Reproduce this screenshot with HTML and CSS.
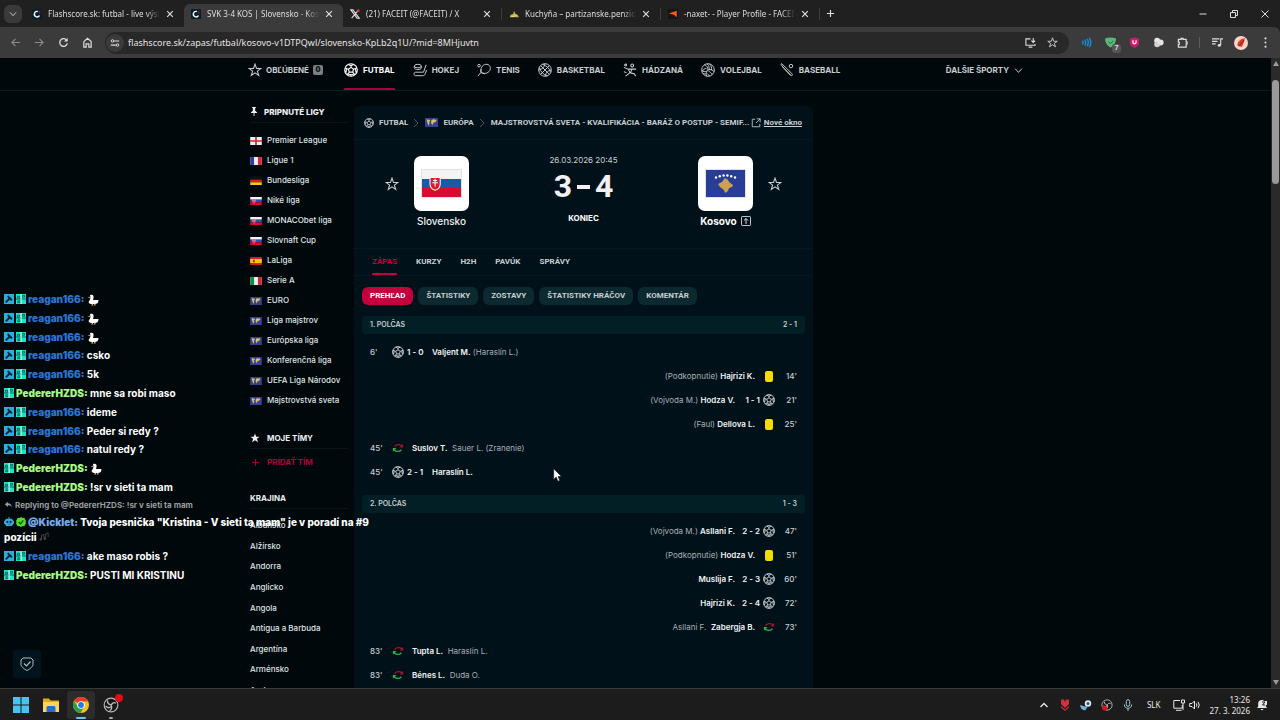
FILE: index.html
```html
<!DOCTYPE html>
<html lang="sk">
<head>
<meta charset="utf-8">
<title>SVK 3-4 KOS | Slovensko - Kosovo</title>
<link rel="stylesheet" href="styles.css">
</head>
<body>
<svg class="defs" aria-hidden="true">
  <symbol id="star" viewBox="0 0 16 16"><path d="M8 1.2l1.7 5h5.2l-4.2 3.1 1.6 5L8 11.2l-4.3 3.1 1.6-5L1.1 6.2h5.2z" fill="none" stroke="currentColor" stroke-width="1.2"/></symbol>
  <symbol id="starfull" viewBox="0 0 16 16"><path d="M8 .8l2 5.2h5.3l-4.2 3.3 1.6 5.5L8 11.6l-4.7 3.2 1.6-5.5L.7 6H6z" fill="currentColor"/></symbol>
  <symbol id="ball" viewBox="0 0 16 16"><g fill="none" stroke="currentColor" stroke-width="1.3"><circle cx="8" cy="8" r="7.2"/><path d="M8 5l3 2.1-1.1 3.4H6.1L5 7.100zM8 5V3M11 7.100l2.200-.8M9.900 10.500l1.500 2M6.100 10.500l-1.500 2M5 7.100l-2.200-.8M5 1.600L8 3l3-1.400M14.900 5.800l-1.700.5.4 3.900 1.200-.4M12.800 13.200l-1.400-.7-3.400 1v1.700M1.100 5.800l1.700.5-.4 3.900-1.200-.4M3.200 13.200l1.400-.7 3.400 1"/></g></symbol>
  <symbol id="hockey" viewBox="0 0 16 16"><g fill="none" stroke="currentColor" stroke-width="1.1"><ellipse cx="5.500" cy="3.500" rx="4" ry="2"/><path d="M1.500 3.500v2c0 2.600 8 2.600 8 0v-2M15 2l-3 8.500H3c-2.500 0-2.500 4 0 4h8c2 0 2.500-.8 3-2.300L15.500 8"/></g></symbol>
  <symbol id="tennis" viewBox="0 0 16 16"><g fill="none" stroke="currentColor" stroke-width="1.1"><path d="M4.500 10.800C3.500 6.500 6 2 10 1.500c3.800-.4 6 2.500 5 6-1 3.600-5.500 5.800-10.500 3.300zM4.500 10.800L1 15M5 11l4 1.400M4.500 10.500L4.800 7"/><circle cx="2.300" cy="3" r="1.500"/></g></symbol>
  <symbol id="basket" viewBox="0 0 16 16"><g fill="none" stroke="currentColor" stroke-width="1.100"><circle cx="8" cy="8" r="7.200"/><path d="M3 3l10 10M13 3L3 13M8 1c-1 4-3 6-7 7M15 8c-4 1-6 3-7 7M5 1.500c5 1.500 8.500 5 9.500 9.500M1.500 5C3 10 6 13.500 11 14.500"/></g></symbol>
  <symbol id="handball" viewBox="0 0 16 16"><g fill="none" stroke="currentColor" stroke-width="1.200"><circle cx="10.500" cy="2.800" r="1.600"/><circle cx="3" cy="2.300" r="1.100"/><path d="M1 5l5 2h9M6 7l2 4-5 4M8 11l5 1.500 1.500 2.500M10.500 7l-2 4M1 10l3 1"/></g></symbol>
  <symbol id="volley" viewBox="0 0 16 16"><g fill="none" stroke="currentColor" stroke-width="1.100"><circle cx="8" cy="8" r="7.200"/><path d="M8 8c0-3-1.500-5-4-6M8 8c3-1 6 0 7 2M8 8c-2 2-3 4.500-1.500 7M9.500 8c0-3-.5-5-2.500-7M12 8c.4-3-.5-5-2-6.700M7 9.200c-2.500 1-4.500.8-6-.5M5.500 12.300c-1.500.5-2.500 0-3.500-.8M8.700 9.300c2 1 3.500 2.500 4 4M7 12c1 1.500 2 2.200 3.500 2.700M6.300 6C4 6.300 2.500 8 1.500 9"/></g></symbol>
  <symbol id="baseball" viewBox="0 0 16 16"><g fill="none" stroke="currentColor" stroke-width="1.100"><path d="M1 1.500l1-.7L13.500 12c1.500 1.500.2 3.500-1.700 2L4 5.500z"/><path d="M3 4.500l9 9"/><circle cx="12.500" cy="3.500" r="2"/></g></symbol>
  <symbol id="x" viewBox="0 0 10 10"><path d="M1.500 1.500l7 7M8.500 1.500l-7 7" stroke="currentColor" stroke-width="1.500"/></symbol>
  <symbol id="chevd" viewBox="0 0 12 12"><path d="M1.500 3.500L6 8.500l4.500-5" fill="none" stroke="currentColor" stroke-width="1.300"/></symbol>
  <symbol id="chevr" viewBox="0 0 12 12"><path d="M3 0L9 6 3 12" fill="none" stroke="currentColor" stroke-width="1.300"/></symbol>
  <symbol id="swap" viewBox="0 0 14 12"><g fill="none" stroke-width="1.500"><path d="M3 4.500C5 1.500 9 1.500 11.500 3.500" stroke="#a3142c"/><path d="M2 7.500c2 3 6.500 3.500 9 .5" stroke="#27b24c"/></g><path d="M13 1v4.500H8.800z" fill="#a3142c"/><path d="M1 10.500V6h4.200z" fill="#27b24c"/></symbol>
  <symbol id="world" viewBox="0 0 13 9"><path fill="#34419a" d="M0 0h13v9H0z"/><path fill="#d9c25e" d="M1.500 1.500l3 .3.8 1L4 4l.5 1.500-1 2-1-2.500zM6.500 2l2-.7 3 .7-.5 1.500-1.500.7-.5 1-.8-1-.7 3-1.500-2.400z"/></symbol>
  <symbol id="sk" viewBox="0 0 13 9"><path fill="#f3f3f3" d="M0 0h13v3H0z"/><path fill="#1c5aa8" d="M0 3h13v3H0z"/><path fill="#d80c30" d="M0 6h13v3H0z"/><g transform="translate(.8 .8) scale(.85)"><path d="M2.200 2h4v2.500c0 1.400-1 2.200-2 2.500-1-.3-2-1.100-2-2.500z" fill="#d81c38" stroke="#fff" stroke-width=".4"/><path d="M4.200 2.500v3M3.400 3.200h1.600M3.100 4.100h2.200" stroke="#fff" stroke-width=".4"/></g></symbol>
  <symbol id="hammer" viewBox="0 0 11 11"><path fill="#28aee0" d="M0 0h11v11H0z"/><path fill="#05252f" d="M4.500 1.500L9.500 6 8 7.600 6.500 6.300 2.500 9.800 1.300 8.600l3.700-4-1.500-1.300z"/></symbol>
  <symbol id="gift" viewBox="0 0 11 11"><path fill="#1de5c0" d="M0 0h11v11H0z"/><path d="M1.500 2.500h2.500v2h-2.500zM7 1.500h2.500v2H7zM0 5.500h11M2 7.500h2.500v2H2z" fill="none" stroke="#075e63"/><path fill="#c4fff0" d="M5 0h1.200v11H5z"/></symbol>
  <symbol id="duck" viewBox="0 0 12 12"><path fill="#fff" d="M3 1.200c2.500-1 4 .3 3.500 2.800L6 6h5.500C11.500 9 10 10 7.500 10H4C1.500 9.500 1 8 2.500 6.500L3.500 4z"/><path fill="#e5b070" d="M3.400 2.500v1.600L.5 3.800zM5 10h1v1.500H4zM7.500 10h1v1.500h-2z"/></symbol>
  <symbol id="obs" viewBox="0 0 18 18"><circle cx="9" cy="9" r="7.700" fill="#171717" stroke="#bbb" stroke-width="1.300"/><path d="M5 4c0 3 2 5 5 5M14.500 7c-2.500-1.500-5 0-5.300 3M7.500 15.500c2.500-1.500 3-4 1.500-6.500M3 10c1.500 2 4 2.500 6 1" fill="none" stroke="#bbb" stroke-width="1.500"/></symbol>
  <symbol id="flash" viewBox="0 0 12 12"><path fill="#07202d" d="M0 0h12v12H0z"/><path d="M7 3a3.300 3.300 0 1 0 2 4.800" fill="none" stroke="#fff" stroke-width="1.700"/><path d="M8 3.500l2-1.500M8.500 5l1.700-.4" stroke="#f03" stroke-width="1.200"/></symbol>
</svg>

<header class="browser">
  <div class="tabstrip">
    <button class="tabsearch" aria-label="Hľadať karty"><svg><use href="#chevd"/></svg></button>
    <div class="tab"><svg class="fav"><use href="#flash"/></svg><span>Flashscore.sk: futbal - live výsle</span><button aria-label="Zavrieť"><svg><use href="#x"/></svg></button></div>
    <div class="tab active"><svg class="fav"><use href="#flash"/></svg><span>SVK 3-4 KOS | Slovensko - Koso</span><button aria-label="Zavrieť"><svg><use href="#x"/></svg></button></div>
    <div class="tab sep"><svg class="fav" viewBox="0 0 12 12"><path d="M1 1h2.500l7.500 10H8.500zM10.500 1L2 11" fill="none" stroke="#ddd" stroke-width="1.300"/><circle cx="10" cy="2" r="1.600" fill="#d33"/></svg><span>(21) FACEIT (@FACEIT) / X</span><button aria-label="Zavrieť"><svg><use href="#x"/></svg></button></div>
    <div class="tab sep"><svg class="fav" viewBox="0 0 12 12"><path d="M1 10c0-3 2-4 4-4l1-4 2 4c2 0 3 2 4 4z" fill="#b9b04d"/><path d="M3 9l6-1" stroke="#f4f0a0"/></svg><span>Kuchyňa – partizanske.penzion-</span><button aria-label="Zavrieť"><svg><use href="#x"/></svg></button></div>
    <div class="tab sep"><svg class="fav" viewBox="0 0 12 12"><path fill="#161616" d="M0 0h12v12H0z"/><path d="M1 5.500L10.500 2v8L7 7z" fill="#ff5a1f"/></svg><span>-naxet- - Player Profile - FACEIT</span><button aria-label="Zavrieť"><svg><use href="#x"/></svg></button></div>
    <button class="newtab" aria-label="Nová karta"><svg viewBox="0 0 10 10"><path d="M5 1v8M1 5h8" stroke="currentColor" stroke-width="1.300"/></svg></button>
    <div class="winctl">
      <button aria-label="Minimalizovať"><svg viewBox="0 0 10 10"><path d="M1.500 5h7" stroke="currentColor"/></svg></button>
      <button aria-label="Obnoviť"><svg viewBox="0 0 10 10"><path d="M1.500 3.500h5v5h-5zM3.500 3V1.500h5v5H7" fill="none" stroke="currentColor"/></svg></button>
      <button aria-label="Zavrieť okno"><svg viewBox="0 0 10 10"><path d="M1.500 1.500l7 7M8.500 1.500l-7 7" stroke="currentColor"/></svg></button>
    </div>
  </div>
  <div class="toolbar">
    <div class="navbtns">
      <button class="off" aria-label="Späť"><svg viewBox="0 0 12 12"><path d="M11 6H2M6 2L2 6l4 4" fill="none" stroke="currentColor" stroke-width="1.200"/></svg></button>
      <button class="off" aria-label="Dopredu"><svg viewBox="0 0 12 12"><path d="M1 6h9M6 2l4 4-4 4" fill="none" stroke="currentColor" stroke-width="1.200"/></svg></button>
      <button aria-label="Obnoviť stránku"><svg viewBox="0 0 12 12"><path d="M9.800 4A4.200 4.200 0 1 0 10.200 7" fill="none" stroke="currentColor" stroke-width="1.400"/><path d="M10.500 1v4h-4z" fill="currentColor"/></svg></button>
      <button aria-label="Domov"><svg viewBox="0 0 12 12"><path d="M2 5l4-3.500L10 5v6H7.500V7.500h-3V11H2z" fill="none" stroke="currentColor" stroke-width="1.300"/></svg></button>
    </div>
    <div class="omnibox">
      <button class="tune" aria-label="Informácie o stránke"><svg viewBox="0 0 12 12"><path d="M5 3.500h6M1 8.500h6" stroke="currentColor" stroke-width="1.300"/><circle cx="3" cy="3.500" r="1.500" fill="none" stroke="currentColor" stroke-width="1.200"/><circle cx="9" cy="8.500" r="1.500" fill="none" stroke="currentColor" stroke-width="1.200"/></svg></button>
      <input type="text" aria-label="Adresa" value="flashscore.sk/zapas/futbal/kosovo-v1DTPQwl/slovensko-KpLb2q1U/?mid=8MHjuvtn">
      <button aria-label="Inštalovať"><svg viewBox="0 0 12 12"><path d="M6 2H1v7h10V7.500M4 11h4M9 1v4.500M7 4l2 2 2-2" fill="none" stroke="currentColor" stroke-width="1.200"/></svg></button>
      <button aria-label="Záložka"><svg><use href="#star"/></svg></button>
    </div>
    <div class="exts">
      <button aria-label="Zvuk"><svg viewBox="0 0 12 12"><path d="M1.500 4q1.500 2 0 4M4 2.800q2.300 3.200 0 6.400M6.500 2q3 4 0 8M9 1q3.500 5 0 10" fill="none" stroke="#178ad8" stroke-width="1.600"/></svg></button>
      <button class="adg" aria-label="AdGuard"><svg viewBox="0 0 12 12"><path d="M0 1.500Q6-.5 12 1.500C12 6 9.500 9.500 6 11.500 2.500 9.500 0 6 0 1.500z" fill="#58b878"/><path d="M4 5.500l2 1.500 3-2.500" stroke="#2b6540" fill="none"/></svg><b>7</b></button>
      <button aria-label="uBlock"><svg viewBox="0 0 12 12"><path d="M6 .5l5 1.200v4.500C11 9 8.500 10.700 6 12 3.500 10.700 1 9 1 6.200V1.700z" fill="#d01c66"/><path d="M4.300 3.500v3q1.700 2 3.400 0v-3" fill="none" stroke="#fff" stroke-width="1.300"/></svg></button>
      <button aria-label="Rozšírenie"><svg viewBox="0 0 12 12"><circle cx="4.500" cy="4" r="3.200" fill="#e8e8e8"/><circle cx="4.500" cy="8" r="3.200" fill="#cfcfcf"/><circle cx="8.300" cy="6" r="3.300" fill="#e2e2e2"/></svg></button>
      <button aria-label="Rozšírenia"><svg viewBox="0 0 12 12"><path d="M1.500 2.500h3V1.500h2v1h3.500v3h1v2h-1v3.500H1.500V8h1V5.500h-1z" fill="none" stroke="currentColor" stroke-width="1.300"/></svg></button>
      <i></i>
      <button aria-label="Médiá"><svg viewBox="0 0 12 12"><path d="M0 2h8M0 4.800h6M0 7.500h4M9.500 9V2H12" fill="none" stroke="currentColor" stroke-width="1.200"/><circle cx="8" cy="9" r="1.700" fill="currentColor"/></svg></button>
      <button class="avatar" aria-label="Profil"><svg viewBox="0 0 14 14"><circle cx="7" cy="7" r="7" fill="#f8d5c8"/><path d="M4 10C2 8 5 4 8 3l3-1-1 4-2 5z" fill="#d9402b"/><path d="M5 10l5-6" stroke="#762018"/></svg></button>
      <button aria-label="Ponuka"><svg viewBox="0 0 12 12"><g fill="currentColor"><circle cx="6" cy="1.500" r="1.100"/><circle cx="6" cy="6" r="1.100"/><circle cx="6" cy="10.500" r="1.100"/></g></svg></button>
    </div>
  </div>
</header>

<div class="viewport">
  <div class="page">
    <nav class="sports"><div class="wrap">
      <a href="#"><svg><use href="#star"/></svg>OBĽÚBENÉ<b class="count">0</b></a>
      <a href="#" class="on"><svg><use href="#ball"/></svg>FUTBAL</a>
      <a href="#"><svg><use href="#hockey"/></svg>HOKEJ</a>
      <a href="#"><svg><use href="#tennis"/></svg>TENIS</a>
      <a href="#"><svg><use href="#basket"/></svg>BASKETBAL</a>
      <a href="#"><svg><use href="#handball"/></svg>HÁDZANÁ</a>
      <a href="#"><svg><use href="#volley"/></svg>VOLEJBAL</a>
      <a href="#"><svg><use href="#baseball"/></svg>BASEBALL</a>
      <button class="more">ĎALŠIE ŠPORTY<svg><use href="#chevd"/></svg></button>
    </div></nav>

    <div class="wrap cols">
      <aside>
        <h2 class="pin"><svg viewBox="0 0 10 12"><path d="M2.500 0h5v1l-1 .8V5L9 7v1H5.600v4H4.400V8H1V7l2.500-2V1.800L2.500 1z" fill="currentColor"/></svg>PRIPNUTÉ LIGY</h2>
        <ul class="leagues">
          <li><a href="#"><svg viewBox="0 0 13 9"><path fill="#eee" d="M0 0h13v9H0z"/><path d="M6.500 0v9M0 4.500h13" stroke="#d3202f" stroke-width="1.800"/></svg>Premier League</a></li>
          <li><a href="#"><svg viewBox="0 0 13 9"><path fill="#eee" d="M0 0h13v9H0z"/><path fill="#2c3fa0" d="M0 0h4.300v9H0z"/><path fill="#d8263a" d="M8.700 0H13v9H8.700z"/></svg>Ligue 1</a></li>
          <li><a href="#"><svg viewBox="0 0 13 9"><path fill="#111" d="M0 0h13v3H0z"/><path fill="#d31f1f" d="M0 3h13v3H0z"/><path fill="#f6c51d" d="M0 6h13v3H0z"/></svg>Bundesliga</a></li>
          <li><a href="#"><svg><use href="#sk"/></svg>Niké liga</a></li>
          <li><a href="#"><svg><use href="#sk"/></svg>MONACObet liga</a></li>
          <li><a href="#"><svg><use href="#sk"/></svg>Slovnaft Cup</a></li>
          <li><a href="#"><svg viewBox="0 0 13 9"><path fill="#cf2027" d="M0 0h13v9H0z"/><path fill="#f8c41c" d="M0 2.200h13v4.600H0z"/><path fill="#96452a" d="M3 3h2.200v3H3z"/></svg>LaLiga</a></li>
          <li><a href="#"><svg viewBox="0 0 13 9"><path fill="#eee" d="M0 0h13v9H0z"/><path fill="#0a9149" d="M0 0h4.300v9H0z"/><path fill="#d3263a" d="M8.700 0H13v9H8.700z"/></svg>Serie A</a></li>
          <li><a href="#"><svg><use href="#world"/></svg>EURO</a></li>
          <li><a href="#"><svg><use href="#world"/></svg>Liga majstrov</a></li>
          <li><a href="#"><svg><use href="#world"/></svg>Európska liga</a></li>
          <li><a href="#"><svg><use href="#world"/></svg>Konferenčná liga</a></li>
          <li><a href="#"><svg><use href="#world"/></svg>UEFA Liga Národov</a></li>
          <li><a href="#"><svg><use href="#world"/></svg>Majstrovstvá sveta</a></li>
        </ul>
        <h2><svg viewBox="0 0 16 16"><use href="#starfull"/></svg>MOJE TÍMY</h2>
        <button class="addteam"><svg viewBox="0 0 10 10"><path d="M5 1v8M1 5h8" stroke="currentColor"/></svg>PRIDAŤ TÍM</button>
        <h2 class="plain">KRAJINA</h2>
        <ul class="countries">
          <li><a href="#">Albánsko</a></li><li><a href="#">Alžírsko</a></li><li><a href="#">Andorra</a></li><li><a href="#">Anglicko</a></li><li><a href="#">Angola</a></li><li><a href="#">Antigua a Barbuda</a></li><li><a href="#">Argentína</a></li><li><a href="#">Arménsko</a></li><li><a href="#">Aruba</a></li>
        </ul>
      </aside>

      <main>
        <div class="crumbs">
          <svg class="cball"><use href="#ball"/></svg><a href="#">FUTBAL</a><svg class="arr"><use href="#chevr"/></svg><svg class="flag"><use href="#world"/></svg><a href="#">EURÓPA</a><svg class="arr"><use href="#chevr"/></svg><a href="#" class="league">MAJSTROVSTVÁ SVETA - KVALIFIKÁCIA - BARÁŽ O POSTUP - SEMIF...</a>
          <a href="#" class="newwin"><svg viewBox="0 0 12 12"><path d="M5 1.500H1.500v9h9V7M7 1h4v4M11 1L6 6" fill="none" stroke="currentColor"/></svg><u>Nové okno</u></a>
        </div>
        <section class="duel">
          <div class="team home">
            <button aria-label="Pridať Slovensko"><svg><use href="#star"/></svg></button>
            <div class="crest"><svg><use href="#sk"/></svg></div>
            <a href="#">Slovensko</a>
          </div>
          <div class="result"><time>26.03.2026 20:45</time><div class="score"><span>3</span><i></i><span>4</span></div><strong>KONIEC</strong></div>
          <div class="team away">
            <button aria-label="Pridať Kosovo"><svg><use href="#star"/></svg></button>
            <div class="crest"><svg viewBox="0 0 39 27"><path fill="#283e96" d="M0 0h39v27H0z"/><path fill="#cda14d" d="M19 8l3 2 1 2 4 3-1 2-3 1-1 3-3 2-1-3-4-3-2-3 4-2z"/><g fill="#fff"><circle cx="10" cy="7.500" r="1.200"/><circle cx="13.800" cy="6.300" r="1.200"/><circle cx="17.600" cy="5.500" r="1.200"/><circle cx="21.400" cy="5.500" r="1.200"/><circle cx="25.200" cy="6.300" r="1.200"/><circle cx="29" cy="7.500" r="1.200"/></g></svg></div>
            <a href="#" class="win">Kosovo<svg viewBox="0 0 12 12"><rect x=".5" y=".5" width="11" height="11" rx="1.500" fill="none" stroke="currentColor"/><path d="M6 9.500V3M3.500 5.500L6 3l2.500 2.500" fill="none" stroke="currentColor"/></svg></a>
          </div>
        </section>
        <nav class="tabs"><a href="#" class="on">ZÁPAS</a><a href="#">KURZY</a><a href="#">H2H</a><a href="#">PAVÚK</a><a href="#">SPRÁVY</a></nav>
        <div class="pills"><button class="on">PREHĽAD</button><button>ŠTATISTIKY</button><button>ZOSTAVY</button><button>ŠTATISTIKY HRÁČOV</button><button>KOMENTÁR</button></div>

        <section class="half">
          <h3><span>1. POLČAS</span><span>2 - 1</span></h3>
          <div class="ev"><time>6'</time><svg><use href="#ball"/></svg><b class="sc">1 - 0</b><p><b>Valjent M.</b> (Haraslín L.)</p></div>
          <div class="ev r"><time>14'</time><i class="card"></i><p>(Podkopnutie) <b>Hajrizi K.</b></p></div>
          <div class="ev r"><time>21'</time><svg><use href="#ball"/></svg><b class="sc">1 - 1</b><p>(Vojvoda M.) <b>Hodza V.</b></p></div>
          <div class="ev r"><time>25'</time><i class="card"></i><p>(Faul) <b>Dellova L.</b></p></div>
          <div class="ev"><time>45'</time><svg><use href="#swap"/></svg><p><b>Suslov T.</b>&nbsp; Sauer L. (Zranenie)</p></div>
          <div class="ev"><time>45'</time><svg><use href="#ball"/></svg><b class="sc">2 - 1</b><p><b>Haraslín L.</b></p></div>
        </section>
        <section class="half">
          <h3><span>2. POLČAS</span><span>1 - 3</span></h3>
          <div class="ev r"><time>47'</time><svg><use href="#ball"/></svg><b class="sc">2 - 2</b><p>(Vojvoda M.) <b>Asllani F.</b></p></div>
          <div class="ev r"><time>51'</time><i class="card"></i><p>(Podkopnutie) <b>Hodza V.</b></p></div>
          <div class="ev r"><time>60'</time><svg><use href="#ball"/></svg><b class="sc">2 - 3</b><p><b>Muslija F.</b></p></div>
          <div class="ev r"><time>72'</time><svg><use href="#ball"/></svg><b class="sc">2 - 4</b><p><b>Hajrizi K.</b></p></div>
          <div class="ev r"><time>73'</time><svg><use href="#swap"/></svg><p>Asllani F. &nbsp;<b>Zabergja B.</b></p></div>
          <div class="ev"><time>83'</time><svg><use href="#swap"/></svg><p><b>Tupta L.</b>&nbsp; Haraslín L.</p></div>
          <div class="ev"><time>83'</time><svg><use href="#swap"/></svg><p><b>Bénes L.</b>&nbsp; Duda O.</p></div>
        </section>
      </main>
    </div>
  </div>
  <div class="scroll"><i class="up"></i><i class="thumb"></i><i class="down"></i></div>
  <button class="privacy" aria-label="Súkromie"><svg viewBox="0 0 14 14"><path d="M3 1h8l2 2v4.500c0 2-3 4.500-6 6-3-1.500-6-4-6-6V3z" fill="none" stroke="currentColor"/><path d="M4 6.500L6.500 9l4-4.500" fill="none" stroke="currentColor" stroke-width="1.200"/></svg></button>
</div>

<div class="chat">
  <div class="msgs">
    <p><svg><use href="#hammer"/></svg><svg><use href="#gift"/></svg><b class="re">reagan166:</b> <svg class="emote"><use href="#duck"/></svg></p>
    <p><svg><use href="#hammer"/></svg><svg><use href="#gift"/></svg><b class="re">reagan166:</b> <svg class="emote"><use href="#duck"/></svg></p>
    <p><svg><use href="#hammer"/></svg><svg><use href="#gift"/></svg><b class="re">reagan166:</b> <svg class="emote"><use href="#duck"/></svg></p>
    <p><svg><use href="#hammer"/></svg><svg><use href="#gift"/></svg><b class="re">reagan166:</b> csko</p>
    <p><svg><use href="#hammer"/></svg><svg><use href="#gift"/></svg><b class="re">reagan166:</b> 5k</p>
    <p><svg><use href="#gift"/></svg><b class="pe">PedererHZDS:</b> mne sa robi maso</p>
    <p><svg><use href="#hammer"/></svg><svg><use href="#gift"/></svg><b class="re">reagan166:</b> ideme</p>
    <p><svg><use href="#hammer"/></svg><svg><use href="#gift"/></svg><b class="re">reagan166:</b> Peder si redy ?</p>
    <p><svg><use href="#hammer"/></svg><svg><use href="#gift"/></svg><b class="re">reagan166:</b> natul redy ?</p>
    <p><svg><use href="#gift"/></svg><b class="pe">PedererHZDS:</b> <svg class="emote"><use href="#duck"/></svg></p>
    <p><svg><use href="#gift"/></svg><b class="pe">PedererHZDS:</b> !sr v sieti ta mam</p>
  </div>
  <p class="reply"><svg viewBox="0 0 12 12"><path d="M5 1L.5 5 5 9V6.500c3 0 5 .5 6 3.500 0-4-2-6.500-6-6.500z" fill="currentColor"/></svg>Replying to @PedererHZDS: !sr v sieti ta mam</p>
  <p class="long"><svg viewBox="0 0 11 11"><path d="M5 0h1v2h2.500L10 3.500 11 5v2l-1 1-1.500 2h-6L1 8 0 7V5l1-1.500L2.500 2H5z" fill="#37a9df"/><path d="M3 4.500h1.500v1.700H3zM6.500 4.500H8v1.700H6.500zM4 8h3.500" fill="#092033" stroke="#092033" stroke-width=".4"/></svg><svg viewBox="0 0 11 11"><path d="M5.500 0l1.700 1 2-.1.800 1.800 1 1.300-.5 1.500.5 1.600-1 1.300-.8 1.700-2-.1-1.700 1-1.700-1-2 .1L1 8.400 0 7.100l.5-1.600L0 4l1-1.300L1.800.9l2 .1z" fill="#50dc28"/><path d="M3 5.500l2 2 3-3.700" fill="none" stroke="#083d00" stroke-width="1.200"/></svg><b class="ki">@Kicklet:</b> Tvoja pesnička "Kristina - V sieti ta mam" je v poradí na #9<br>pozícii <svg class="notes" viewBox="0 0 12 12"><path d="M3 9V4l3-1v5M8 7V2l3-1v5" fill="none" stroke="currentColor"/><circle cx="2" cy="9" r="1.400" fill="currentColor"/><circle cx="7" cy="8" r="1.400" fill="currentColor"/></svg></p>
  <p><svg><use href="#hammer"/></svg><svg><use href="#gift"/></svg><b class="re">reagan166:</b> ake maso robis ?</p>
  <p><svg><use href="#gift"/></svg><b class="pe">PedererHZDS:</b> PUSTI MI KRISTINU</p>
</div>

<svg class="cursor" viewBox="0 0 9 14"><path d="M.7.8v10.600l2.500-2.300 1.700 4.100 1.900-.8L5.100 8.400h3.300z" fill="#fff" stroke="#111" stroke-width=".6"/></svg>

<footer class="taskbar">
  <div class="apps">
    <button aria-label="Štart"><svg viewBox="0 0 16 16"><path d="M0 0h7.500v7.500H0zM8.500 0H16v7.500H8.500zM0 8.500h7.500V16H0zM8.500 8.500H16V16H8.500z" fill="#49c2f2"/></svg></button>
    <button aria-label="Prieskumník"><svg viewBox="0 0 16 16"><path fill="#e6a817" d="M0 1.500h6l1.500 2H16V15H0z"/><path fill="#ffd65a" d="M0 5h16v10H0z"/><path fill="#1975c5" d="M3.500 10.500q0-1.500 1.500-1.500h6q1.500 0 1.500 1.500V15h-9z"/></svg></button>
    <button class="run big" aria-label="Chrome"><svg viewBox="0 0 16 16"><circle cx="8" cy="8" r="8" fill="#f9c31f"/><path d="M8 8L1 4.100A8 8 0 0 1 15 4.100L15 4.500H8z" fill="#e33b2e"/><path d="M1 4.100A8 8 0 0 0 7.500 16L11.200 9.800 8 8 4.800 9.800z" fill="#26a04a"/><circle cx="8" cy="8" r="3.800" fill="#fff"/><circle cx="8" cy="8" r="2.900" fill="#2b77e8"/></svg></button>
    <button class="run" aria-label="OBS"><svg viewBox="0 0 18 18"><use href="#obs"/></svg><i class="rec"></i></button>
  </div>
  <div class="tray">
    <svg viewBox="0 0 12 12"><path d="M2.500 8L6 4.500 9.500 8" fill="none" stroke="currentColor" stroke-width="1.300"/></svg>
    <svg viewBox="0 0 12 12"><path d="M2 .5h3L6 3l1-2.500h3V5L6 9 2 5zM2 7l4 3.500L10 7v1.500L6 12 2 8.500z" fill="#d0303f"/></svg>
    <svg viewBox="0 0 12 12"><circle cx="8" cy="4.500" r="3.200" fill="#dbe9f4"/><path d="M0 6l5 1.500L8 7 5.500 11C2.500 12 .5 9.500 0 6z" fill="#6db3dc"/><circle cx="8" cy="4.500" r="1.500" fill="#23567c"/></svg>
    <svg viewBox="0 0 12 12"><use href="#obs"/><circle cx="3.500" cy="9" r="2.500" fill="#e30e18"/></svg>
    <svg viewBox="0 0 12 12"><rect x="4.300" y=".7" width="3.400" height="6.600" rx="1.700" fill="none" stroke="#9bc9d3"/><path d="M2.300 5.500c0 5 7.400 5 7.400 0M6 9.300V12" fill="none" stroke="#9bc9d3"/></svg>
    <span class="lang">SLK</span>
    <svg viewBox="0 0 12 12"><path d="M7 1.500H.8v7.700h8.500V6M3 11.300h5.500M8.500 1h3v3h-3zM10 4v7" fill="none" stroke="currentColor"/></svg>
    <svg class="snd" viewBox="0 0 12 12"><path d="M.7 4.500H3L5.500 2v8L3 7.500H.7zM7.300 4.300q1.300 1.700 0 3.400M9 2.800q2.600 3.200 0 6.400" fill="none" stroke="currentColor"/></svg>
    <time>13:26<br>27. 3. 2026</time>
    <svg viewBox="0 0 12 12"><path d="M1 9l1.200-1.500V4C2.500.5 7 .3 8 2h3v3.500L9.500 7l1.500 2zM4.500 10h3q-1.500 2.500-3 0z" fill="currentColor"/><path d="M6 3h3L6.500 6H9" fill="none" stroke="#1c1c1c"/></svg>
  </div>
</footer>
</body>
</html>
```

FILE: styles.css
```css
* { box-sizing: border-box; }
body { margin: 0; height: 100vh; display: flex; flex-direction: column; overflow: hidden; position: relative; background: #00080b; color: #dfe3e5; font: 500 8px/12px Inter, sans-serif; }
button { border: 0; padding: 0; background: none; color: inherit; font: inherit; display: flex; align-items: center; justify-content: center; }
a { color: inherit; text-decoration: none; }
ul { list-style: none; margin: 0; padding: 0; }
p, h2, h3 { margin: 0; }
svg { display: block; flex: none; width: 12px; height: 12px; }
.defs { position: absolute; width: 0; height: 0; }

/* browser */
.browser { flex: none; background: #202020; color: #dedede; font: 9px/12px "Noto Sans", sans-serif; }
.tabstrip { display: flex; align-items: center; height: 27px; padding-left: 4px; }
.tabsearch { width: 18px; height: 18px; border-radius: 6px; background: #3a3a3a; margin-right: 3px; }
.tabsearch svg { width: 8px; height: 8px; }
.tab { flex: 0 1 159px; min-width: 0; height: 23px; margin-top: 4px; padding: 0 10px 4px 7px; display: flex; align-items: center; gap: 6px; position: relative; }
.tab span { flex: 1; min-width: 0; overflow: hidden; white-space: nowrap; font-size: 8px; mask-image: linear-gradient(90deg, #000 88%, transparent); }
.tab .fav { width: 10px; height: 10px; }
.tab button svg { width: 8px; height: 8px; }
.tab.active { background: #3b3b3b; border-radius: 6px 6px 0 0; }
.tab.sep { border-right: 1px solid #3b3b3b; height: 12px; margin: 0; padding-bottom: 0; }
.newtab { width: 20px; height: 20px; }
.newtab svg { width: 9px; height: 9px; }
.winctl { margin-left: auto; display: flex; }
.winctl button { width: 31px; height: 26px; }
.winctl svg { width: 10px; height: 10px; }
.toolbar { height: 31px; display: flex; align-items: center; background: #3b3b3b; border-radius: 0 6px 0 0; padding: 0 3px; }
.navbtns { display: flex; }
.navbtns button { width: 24px; height: 24px; }
.navbtns svg { width: 11px; height: 11px; }
.navbtns .off { color: #8b8b8b; }
.omnibox { flex: 1; height: 22px; margin: 0 5px 0 6px; padding: 0 6px 0 1px; border-radius: 11px; background: #282828; display: flex; align-items: center; }
.omnibox button { width: 22px; height: 20px; }
.omnibox button svg { width: 11px; height: 11px; }
.omnibox .tune { width: 18px; height: 18px; border-radius: 9px; background: #3b3b3b; }
.omnibox .tune svg { width: 10px; height: 10px; }
.omnibox input { flex: 1; min-width: 0; border: 0; background: none; outline: 0; padding: 0 4px; color: #e3e3e3; font: inherit; }
.exts { display: flex; align-items: center; }
.exts button { width: 24px; height: 22px; position: relative; }
.exts svg { width: 11px; height: 11px; }
.exts .avatar svg { width: 14px; height: 14px; }
.exts i { width: 1px; height: 11px; margin: 0 5px; background: #5d5d5d; }
.adg b { position: absolute; right: 1px; bottom: 1px; width: 9px; height: 9px; border-radius: 3px; background: #555; font: bold 7px/9px Roboto, sans-serif; text-align: center; }

/* page */
.viewport { flex: 1; min-height: 0; display: flex; position: relative; overflow: hidden; }
.page { flex: 1; min-width: 0; overflow: hidden; }
.wrap { max-width: 775px; margin: 0 auto; }
.sports { border-bottom: 1px solid #0a1b20; }
.sports .wrap { display: flex; height: 32px; gap: 18px; font-weight: 700; }
.sports a, .more { display: flex; align-items: center; gap: 5px; padding-bottom: 6px; border-bottom: 2px solid transparent; color: #c9cdcf; }
.sports svg { width: 14px; height: 14px; }
.sports .on { color: #fff; border-color: #a9003c; }
.sports a:first-child { margin-right: 3px; gap: 4px; }
.count { width: 10px; height: 10px; border-radius: 2px; background: #7b8083; color: #0a1418; font-size: 7px; line-height: 10px; text-align: center; }
.more { margin-left: auto; font-weight: 700; }
.sports .more svg { width: 9px; height: 9px; }
.cols { display: grid; grid-template-columns: 100px minmax(0, 459px) 1fr; gap: 6px; padding-top: 15px; }
aside { padding-left: 2px; }
h2 { display: flex; align-items: center; gap: 7px; height: 17px; padding-bottom: 5px; border-bottom: 1px solid #07161a; font-size: 8px; line-height: 12px; font-weight: 700; color: #eef0f1; }
h2 svg { width: 10px; height: 10px; }
h2.pin { gap: 6px; font-weight: 800; }
h2.pin svg { width: 8px; height: 9px; }
.leagues { padding: 7px 0 22px; }
.leagues a { display: flex; align-items: center; gap: 5px; height: 20px; white-space: nowrap; }
.leagues svg { width: 12px; height: 8px; margin-top: 1px; }
.addteam { gap: 6px; height: 12px; margin: 7px 0 24px; color: #b00039; font-weight: 700; }
.addteam svg { width: 11px; height: 9px; }
.countries { height: 185px; margin-top: 6px; display: flex; flex-direction: column; justify-content: space-between; }
.countries a { display: block; line-height: 20px; }

main { background: #00111a; border-radius: 6px; color: #c9ced1; padding-bottom: 8px; }
.crumbs, .tabs, .pills { font-family: Roboto, sans-serif; font-weight: 700; }
.crumbs { display: flex; align-items: center; height: 34px; padding: 0 11px 0 10px; border-bottom: 1px solid #04191f; white-space: nowrap; }
.crumbs svg { width: 10px; height: 10px; }
.crumbs .cball { margin-right: 5px; }
.crumbs .arr { width: 8px; height: 8px; margin: 0 5px 0 4px; color: #53646b; }
.crumbs .flag { width: 13px; height: 9px; margin-right: 5px; }
.newwin { display: flex; gap: 3px; align-items: center; margin-left: auto; }
.duel { display: grid; grid-template-columns: 1fr 109px 1fr; height: 109px; padding-top: 16px; border-bottom: 1px solid #04191f; }
.team { display: grid; grid-template-columns: 14px 55px 14px; column-gap: 15px; justify-content: center; grid-template-rows: 55px 20px; align-items: center; }
.team button { grid-row: 1; }
.team.away button { grid-column: 3; }
.team svg { width: 14px; height: 14px; }
.crest { grid-row: 1; grid-column: 2; height: 55px; border-radius: 7px; background: #fff; display: grid; place-items: center; }
.crest svg { width: 39px; height: 27px; outline: 1px solid #dfe3e6; }
.team > a { grid-row: 2; grid-column: 1 / 4; justify-self: center; font-size: 10px; font-weight: 500; color: #eef0f1; display: flex; align-items: center; gap: 4px; }
.team > a svg { width: 10px; height: 10px; }
.team .win { font-weight: 700; color: #fff; }
.result { display: flex; flex-direction: column; align-items: center; }
.result time { line-height: 9px; font-weight: 400; }
.score { display: flex; align-items: center; gap: 5px; height: 43px; font: 700 32px/43px Roboto, sans-serif; color: #f3f0f6; }
.score i { width: 13px; height: 4px; background: #f3f0f6; }
.result strong { color: #fff; line-height: 20px; }
.tabs { display: flex; gap: 19px; height: 27px; padding: 0 18px; border-bottom: 1px solid #04191f; }
.tabs a { line-height: 26px; border-bottom: 2px solid transparent; }
.tabs .on { color: #c00040; border-color: #c00040; }
.pills { display: flex; gap: 5px; padding: 11px 8px; }
.pills button { height: 18px; padding: 0 8px; border-radius: 6px; background: #0c2930; }
.pills .on { background: #c3003d; color: #fff; }
.half { padding: 0 8px 11px; }
h3 { display: flex; align-items: center; justify-content: space-between; height: 18px; padding: 0 8px; margin-bottom: 6px; border-radius: 3px; background: #011f24; font-size: 7px; font-weight: 600; }
.ev { display: flex; align-items: center; height: 24px; padding: 0 8px; }
.ev.r { flex-direction: row-reverse; }
.ev time { width: 22px; }
.ev.r time { text-align: right; }
.ev p { margin: 0 8px; color: #a7b0b5; font-weight: 400; }
.ev b { color: #f2f4f5; font-weight: 600; }
.ev .sc { width: 20px; padding: 0 3px; white-space: nowrap; }
.ev.r .sc { display: flex; justify-content: flex-end; }
.card { width: 8px; height: 11px; margin: 0 2px; border-radius: 2px; background: #f4dc00; }

.scroll { flex: none; width: 9px; background: #2a2a2a; display: flex; flex-direction: column; align-items: center; }
.scroll i { width: 7px; }
.scroll .up, .scroll .down { width: 0; border: 3px solid transparent; }
.scroll .up { border-bottom: 5px solid #9a9a9a; border-top: 0; margin-top: 3px; }
.scroll .down { border-top: 5px solid #9a9a9a; border-bottom: 0; margin: auto 0 3px; }
.scroll .thumb { height: 104px; margin-top: 14px; border-radius: 4px; background: #9a9a9a; }
.privacy { position: absolute; left: 13px; bottom: 10px; width: 28px; height: 28px; border-radius: 3px; background: #00141e; color: #b4bcc0; }
.privacy svg { width: 14px; height: 14px; }

/* chat overlay */
.chat { position: absolute; left: 4px; top: 290px; color: #fff; font: 700 10px/15px Inter, sans-serif; white-space: nowrap; }
.msgs { display: flex; flex-direction: column; justify-content: space-between; height: 206px; }
.chat p { height: 18px; line-height: 18px; }
.chat svg { display: inline-block; width: 10px; height: 10px; margin-right: 2px; vertical-align: -1px; }
.chat svg.emote { width: 12px; height: 12px; vertical-align: -3px; }
.re { color: #2c72ce; }
.pe { color: #a8fa82; }
.ki { color: #77a9ea; }
.chat .reply { height: 19px; line-height: 18px; font-size: 8px; color: #9a9d9e; }
.chat .reply svg { width: 9px; height: 8px; }
.chat .long { height: 32px; line-height: 15px; font-weight: 800; }
.chat .notes { color: #4c4b50; }
.chat .long + p { margin-bottom: 1px; }
.cursor { position: absolute; left: 553px; top: 468px; width: 9px; height: 14px; }

/* taskbar */
.taskbar { flex: none; height: 32px; border-top: 1px solid #393939; background: #1c1c1c; color: #e8e8e8; display: flex; justify-content: space-between; font: 8px/11px "Noto Sans", sans-serif; }
.apps { display: flex; align-items: center; gap: 2px; padding-left: 7px; }
.apps button { width: 28px; height: 28px; position: relative; border-radius: 3px; }
.apps svg { width: 16px; height: 16px; }
.apps .big { background: #2c2c2c; }
.run::after { content: ""; position: absolute; bottom: 0; left: 12px; width: 4px; height: 2px; border-radius: 1px; background: #a5a5a5; }
.run.big::after { left: 9px; width: 10px; background: #75bfe8; }
.rec { position: absolute; right: 2px; top: 3px; width: 8px; height: 8px; border-radius: 4px; background: #e50914; }
.tray { display: flex; align-items: center; gap: 9px; padding-right: 12px; }
.tray .lang { margin: 0 3px 0 4px; }
.tray .snd { margin-left: -5px; }
.tray time { min-width: 40px; text-align: right; margin-right: -3px; }
```
